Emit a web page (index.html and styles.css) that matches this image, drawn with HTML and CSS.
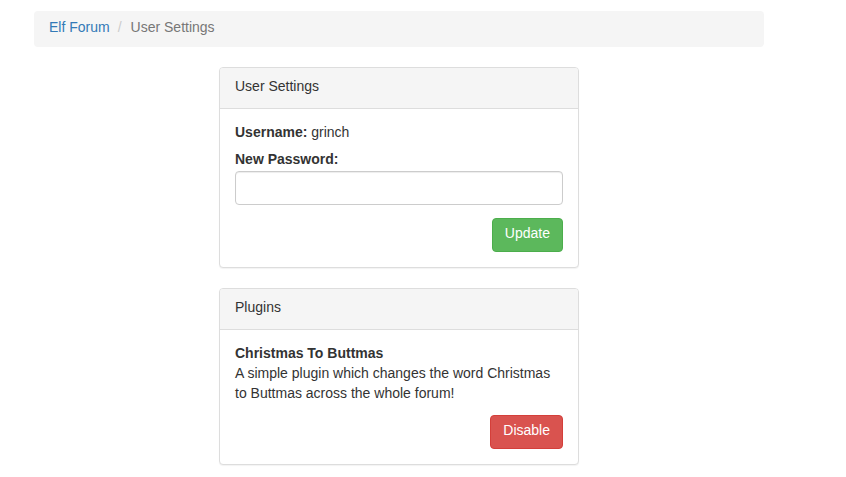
FILE: index.html
```html
<!DOCTYPE html>
<html>
<head>
<meta charset="utf-8">
<link rel="stylesheet" href="styles.css">
</head>
<body>
<div class="page">
  <ol class="breadcrumb">
    <li><a href="#">Elf Forum</a></li>
    <li class="sep">/</li>
    <li class="active">User Settings</li>
  </ol>
  <div class="panels">
    <div class="panel">
      <div class="panel-heading">User Settings</div>
      <div class="panel-body">
        <div class="username"><b>Username:</b> grinch</div>
        <label class="label">New Password:</label>
        <input class="input" type="password">
        <div class="actions"><button class="btn btn-success">Update</button></div>
      </div>
    </div>
    <div class="panel">
      <div class="panel-heading">Plugins</div>
      <div class="panel-body">
        <div class="plugin-name">Christmas To Buttmas</div>
        <div class="plugin-desc">A simple plugin which changes the word Christmas to Buttmas across the whole forum!</div>
        <div class="actions actions-plugin"><button class="btn btn-danger">Disable</button></div>
      </div>
    </div>
  </div>
</div>
</body>
</html>
```
FILE: styles.css
```css
* { box-sizing: border-box; }
html, body { margin: 0; padding: 0; background: #fff; }
body {
  font-family: "Liberation Sans", Arial, sans-serif;
  font-size: 14px;
  line-height: 20px;
  color: #333;
}
.page {
  width: 730px;
  margin-left: 34px;
  padding-top: 11px;
}
.breadcrumb {
  list-style: none;
  margin: 0 0 20px 0;
  padding: 6px 15px 10px 15px;
  background: #f5f5f5;
  border-radius: 4px;
  display: flex;
  height: 36px;
}
.breadcrumb li { display: block; }
.breadcrumb a { color: #337ab7; text-decoration: none; }
.breadcrumb .sep { color: #ccc; padding: 0 9px 0 8px; }
.breadcrumb .active { color: #777; }
.panels {
  width: 360px;
  margin: 0 auto;
}
.panel {
  border: 1px solid #ddd;
  border-radius: 4px;
  background: #fff;
  margin-bottom: 20px;
  box-shadow: 0 1px 1px rgba(0,0,0,0.05);
}
.panel-heading {
  background: #f5f5f5;
  border-bottom: 1px solid #ddd;
  padding: 8px 15px 12px 15px;
  border-radius: 3px 3px 0 0;
  color: #333;
}
.panel-body {
  padding: 13px 15px 15px 15px;
}
.username { margin-bottom: 7px; }
.label {
  display: block;
  font-weight: bold;
  margin-bottom: 2px;
}
.input {
  display: block;
  width: 100%;
  height: 34px;
  border: 1px solid #ccc;
  border-radius: 4px;
  box-shadow: inset 0 1px 1px rgba(0,0,0,0.075);
  padding: 6px 12px;
  font: inherit;
}
.actions {
  display: flex;
  justify-content: flex-end;
  margin-top: 13px;
}
.actions-plugin { margin-top: 12px; }
.plugin-name { font-weight: bold; }
.btn {
  font-family: inherit;
  font-size: 14px;
  line-height: 20px;
  padding: 4px 12px 8px 12px;
  border: 1px solid transparent;
  border-radius: 4px;
  color: #fff;
  height: 34px;
}
.btn-success { background: #5cb85c; border-color: #4cae4c; }
.btn-danger { background: #d9534f; border-color: #d43f3a; }
```
